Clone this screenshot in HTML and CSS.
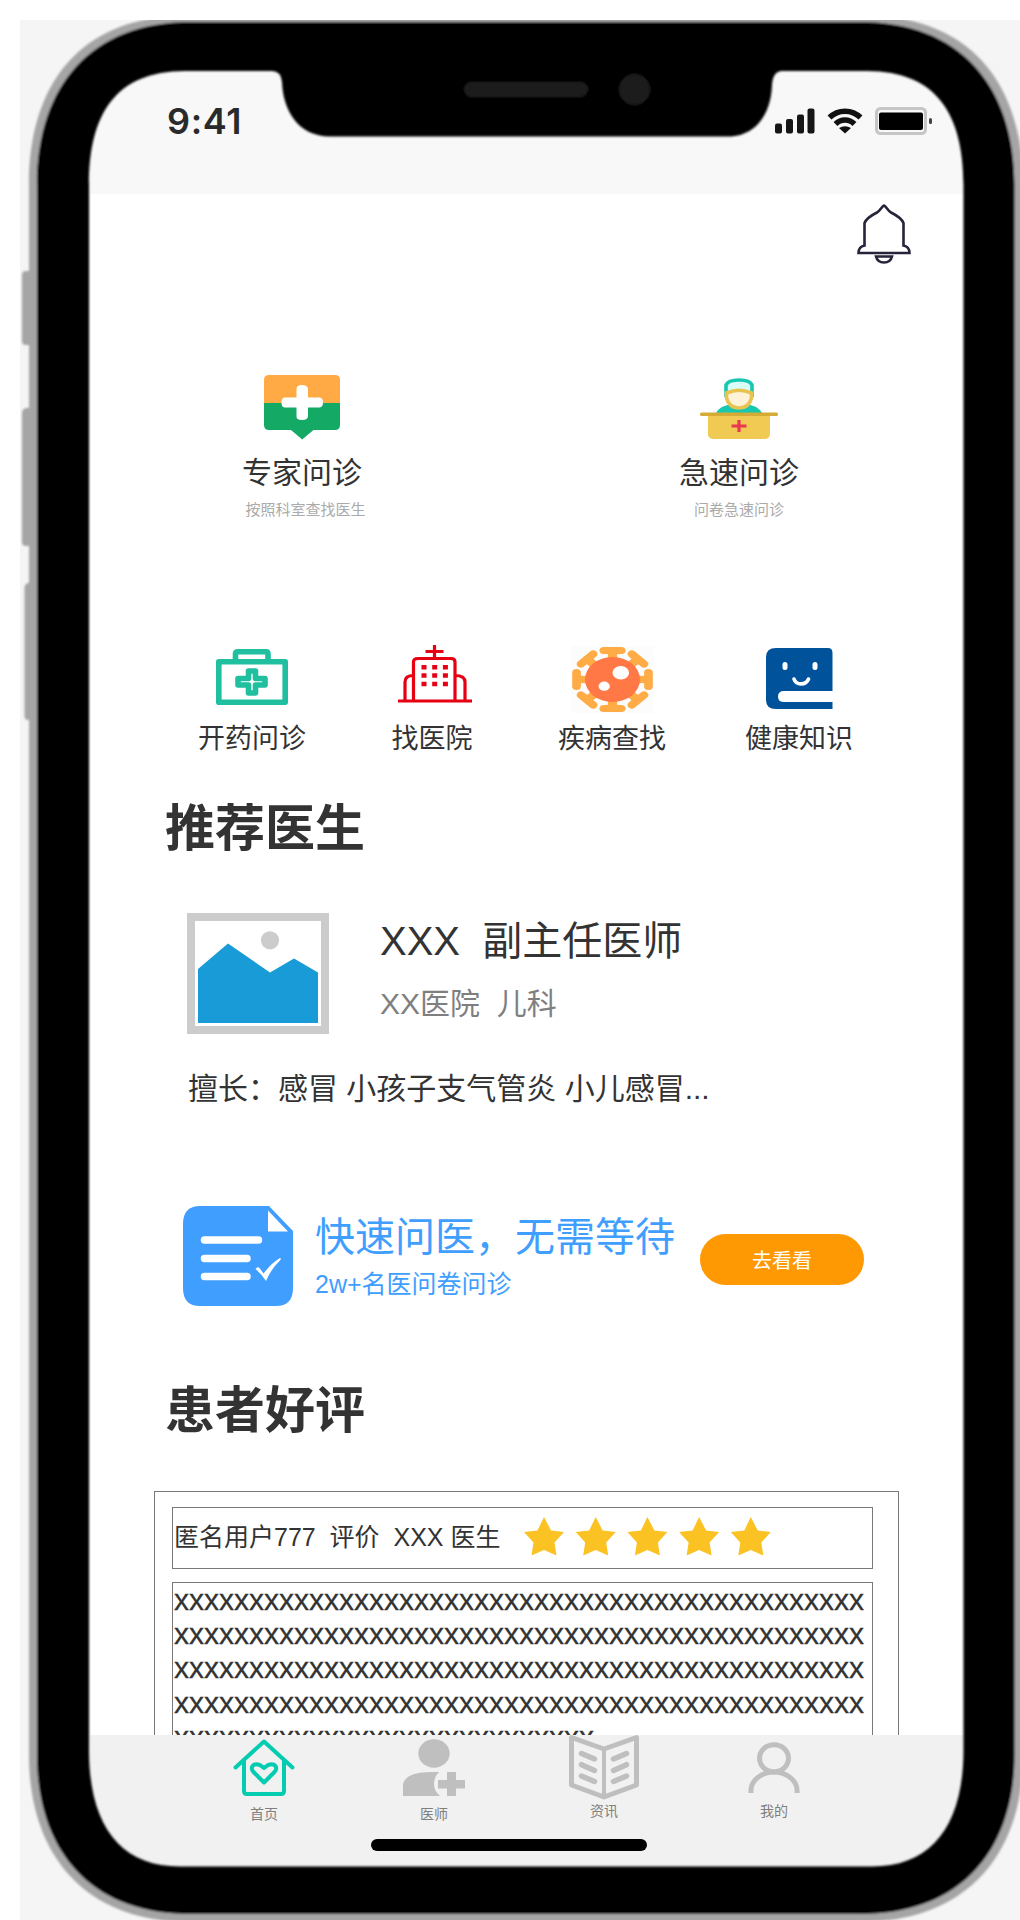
FILE: index.html
```html
<!DOCTYPE html>
<html lang="zh-CN">
<head>
<meta charset="utf-8">
<title>在线问诊</title>
<link rel="stylesheet" href="styles.css">
</head>
<body>
<div class="stage">
  <main class="screen">
    <header class="status">
      <span class="time">9:41</span>
      <svg class="signal" viewBox="0 0 40 26"><rect x="0" y="15.500" width="7" height="10" rx="2"/><rect x="11" y="11" width="7" height="14.500" rx="2"/><rect x="22" y="6.500" width="7" height="19" rx="2"/><rect x="32.500" y="0.500" width="7" height="25" rx="2"/></svg>
      <svg class="wifi" viewBox="0 0 36 26"><g fill="none" stroke="#111" stroke-width="5.500"><path d="M2.500 9.500C11 1 25 1 33.500 9.500"/><path d="M8.500 16C14 10.500 22 10.500 27.500 16"/></g><path d="M12 20Q18 16.500 24 20L18 25.500z" fill="#111"/></svg>
      <svg class="battery" viewBox="0 0 58 28"><rect x="1.500" y="1.500" width="49" height="25" rx="4" fill="none" stroke="#c6c6c6" stroke-width="3"/><rect x="4" y="5.500" width="44" height="17.500" rx="2" fill="#000"/><rect x="54" y="11" width="3" height="6" rx="1.500" fill="#444"/></svg>
    </header>

    <section class="feed">
      <div class="toolbar">
        <svg class="bell" viewBox="0 0 54 60" fill="none" stroke="#27233a" stroke-width="2.600"><path d="M27 1.500C25 2 23 7 20 8.500C15 11 9 15.500 7.500 19V41.500C4 42 1.500 45 1.500 49H52.500C52.500 45 50 42 46.500 41.500V19C45 15.500 39 11 34 8.500C31 7 29 2 27 1.500z"/><path d="M19 52.500H35C34 56.500 31 58.500 27 58.500S20 56.500 19 52.500z"/></svg>
      </div>

      <nav class="primary">
        <a class="entry">
          <svg class="entry-icon" width="76" height="65" viewBox="0 0 76 65"><path d="M5 0H71Q76 0 76 5V28H0V5Q0 0 5 0z" fill="#ffaa44"/><path d="M0 28H76V50Q76 55 71 55H49.500L38.200 64.500L27 55H5Q0 55 0 50z" fill="#14aa66"/><path d="M32.500 14Q32.500 10 38 10T44 14V22.500H55Q59 22.500 59 27.500T55 32.500H44V41Q44 45 38 45T32.500 41V32.500H21Q17.500 32.500 17.500 27.500T21 22.500H32.500z" fill="#fff"/></svg>
          <span class="entry-title">专家问诊</span>
          <span class="entry-note shift">按照科室查找医生</span>
        </a>
        <a class="entry">
          <svg class="entry-icon" width="78" height="62" viewBox="0 0 78 62"><path d="M16 35C20 28 27 26 39 26S58 28 62 35z" fill="#18c7b0"/><path d="M26 19V7Q28 2 39 2T52 7V19" fill="#d9fffb" stroke="#18c7b0" stroke-width="3.600"/><path d="M26.500 15Q39 9.500 51.500 15V20Q49 30 39 30T26.500 20z" fill="#fef2d8" stroke="#e9c351" stroke-width="3.600"/><path d="M8 36H70V56Q70 61 64 61H14Q8 61 8 56z" fill="#f0ca52"/><rect x="0" y="34.500" width="78" height="3.500" rx="1.500" fill="#d5aa35"/><path d="M39 42V54M31.500 48H46.500" stroke="#e8394f" stroke-width="3.200"/></svg>
          <span class="entry-title">急速问诊</span>
          <span class="entry-note">问卷急速问诊</span>
        </a>
      </nav>

      <nav class="secondary">
        <a class="shortcut">
          <span class="shortcut-icon"><svg width="72" height="56" viewBox="0 0 72 56"><g fill="none" stroke="#1fbf9f" stroke-width="5.600" stroke-linejoin="round"><rect x="2.800" y="12.800" width="66.400" height="40.400"/><path d="M19.500 12V5Q19.500 2.800 22 2.800H50Q52 2.800 52 5V12"/><path d="M32.500 22H39.500V29.500H49V36H39.500V44H32.500V36H22V29.500H32.500z"/></g></svg></span>
          <span>开药问诊</span>
        </a>
        <a class="shortcut">
          <span class="shortcut-icon hospital"><svg width="74" height="58" viewBox="0 0 74 58"><g fill="none" stroke="#e60012" stroke-width="3.200"><path d="M0 56H74M36.500 0V14M27.500 6.500H45.500M15.500 56V17Q15.500 13.500 20 13.500H53Q57 13.500 57 17V56M15.500 30.500Q7 30.500 7 37V56M57 30.500Q67 30.500 67 37V56"/><path d="M23.500 22.200H50M23.500 30.500H50M23.500 39H50" stroke-width="4.400" stroke-dasharray="5 5.700"/></g></svg></span>
          <span>找医院</span>
        </a>
        <a class="shortcut">
          <span class="shortcut-icon virus"><svg width="83" height="67" viewBox="-41.500 -33.500 83 67"><rect x="-41.500" y="-33.500" width="83" height="67" fill="#fcfcfc"/><defs><g id="spike"><path d="M-7-29H7" stroke="#ffac47" stroke-width="7" stroke-linecap="round"/><path d="M-5-27Q-2.500-25-4.500-20H4.500Q2.500-25 5-27z" fill="#ffac47"/></g></defs><g transform="scale(1.240 1)"><use href="#spike"/><use href="#spike" transform="rotate(45)"/><use href="#spike" transform="rotate(90)"/><use href="#spike" transform="rotate(135)"/><use href="#spike" transform="rotate(180)"/><use href="#spike" transform="rotate(225)"/><use href="#spike" transform="rotate(270)"/><use href="#spike" transform="rotate(315)"/></g><ellipse rx="27.500" ry="22.500" fill="#ff7846"/><ellipse cx="8.300" cy="-6.700" rx="8.300" ry="6.800" fill="#fff"/><ellipse cx="-8.300" cy="6.700" rx="5.600" ry="4.600" fill="#fff"/></svg></span>
          <span>疾病查找</span>
        </a>
        <a class="shortcut">
          <span class="shortcut-icon book"><svg width="67" height="62" viewBox="0 0 67 62"><path d="M10 0H62Q66.500 0 66.500 5V43H18Q12 43 12 48.500T18 54H66.500V61H10Q0 61 0 52V9Q0 0 10 0z" fill="#00529b"/><g fill="none" stroke="#fff" stroke-linecap="round"><path d="M19 16.500V19.500M49 16.500V19.500" stroke-width="5"/><path d="M28 31C30 37.500 40 37.500 42.500 31" stroke-width="3.600"/></g></svg></span>
          <span>健康知识</span>
        </a>
      </nav>

      <h2 class="heading">推荐医生</h2>
      <article class="doctor">
        <div class="doctor-head">
          <svg class="photo" viewBox="0 0 142 121"><path d="M0 0H142V121H0z" fill="#ccc"/><path d="M8 8H134V113H8z" fill="#fff"/><path d="M11 56L41 30.500L83 59.500L107 45.500L131 59.500V110H11z" fill="#189bd7"/><circle cx="83" cy="27.300" r="9.100" fill="#ccc"/></svg>
          <div class="doctor-info">
            <div class="doctor-name">XXX&nbsp; 副主任医师</div>
            <div class="doctor-dept">XX医院&nbsp; 儿科</div>
          </div>
        </div>
        <p class="skills">擅长：感冒 小孩子支气管炎 小儿感冒...</p>
      </article>

      <aside class="promo">
        <svg class="promo-icon" viewBox="0 0 110 100"><path d="M17 0H86L110 25V82Q110 100 93 100H17Q0 100 0 82V18Q0 0 17 0z" fill="#409eff"/><path d="M85 4.500L105 25.500H85z" fill="#fff"/><path d="M21.500 34H75.500M21.500 52.500H64M21.500 70.500H64" stroke="#fff" stroke-width="7.500" stroke-linecap="round"/><path d="M72.500 63Q74.500 60 76.500 62L80.500 67.500Q89 56.500 97 52Q98.500 52 97 54.500Q88 63 83 75Q78.500 68 72.500 63z" fill="#fff"/></svg>
        <div class="promo-copy">
          <div class="promo-title">快速问医，无需等待</div>
          <div class="promo-sub">2w+名医问卷问诊</div>
        </div>
        <button class="go">去看看</button>
      </aside>

      <h2 class="heading reviews">患者好评</h2>
      <article class="review">
        <div class="review-head">
          <span>匿名用户777&nbsp; 评价&nbsp; XXX 医生</span>
          <svg class="stars" viewBox="0 0 247 39"><defs><path id="star" d="M20 0L27 13.500L40 15L30.500 25.500L32.500 38.500L20 33L7.500 38.500L9.500 25.500L0 15L13.500 13.500z" fill="#fbc224"/></defs><use href="#star"/><use href="#star" x="51.700"/><use href="#star" x="103.400"/><use href="#star" x="155.100"/><use href="#star" x="206.800"/></svg>
        </div>
        <p class="review-body">xxxxxxxxxx<wbr>xxxxxxxxxx<wbr>xxxxxxxxxx<wbr>xxxxxxxxxx<wbr>xxxxxxxxxx<wbr>xxxxxxxxxx<wbr>xxxxxxxxxx<wbr>xxxxxxxxxx<wbr>xxxxxxxxxx<wbr>xxxxxxxxxx<wbr>xxxxxxxxxx<wbr>xxxxxxxxxx<wbr>xxxxxxxxxx<wbr>xxxxxxxxxx<wbr>xxxxxxxxxx<wbr>xxxxxxxxxx<wbr>xxxxxxxxxx<wbr>xxxxxxxxxx<wbr>xxxxxxxxxx<wbr>xxxxxxxxxx<wbr>xxxxxxxxxx<wbr>xx</p>
      </article>
    </section>

    <footer class="dock">
      <nav class="tabs">
        <a class="tab"><svg width="62" height="58" viewBox="0 0 62 58" fill="none" stroke="#04ccb0" stroke-width="4" stroke-linecap="round" stroke-linejoin="round"><path d="M2.500 28.500L31 2.500L59.500 28.500M11 21.500V52Q11 55 14 55H48Q51 55 51 52V21.500"/><path d="M31 43.500L20.500 33Q17 29 20.500 26Q25 23.500 31 29Q37 23.500 41.500 26Q45 29 41.500 33z"/></svg><span>首页</span></a>
        <a class="tab"><svg width="62" height="58" viewBox="0 0 62 58" fill="#bfbfbf"><ellipse cx="31" cy="14.500" rx="15.700" ry="14.200"/><path d="M0 57V45Q3 33 28 33H36Q31 38 31 45T37 57z"/><path d="M44 33H53V41H62V49.500H53V57H44V49.500H35V41H44z"/></svg><span>医师</span></a>
        <a class="tab news"><svg width="70" height="65" viewBox="0 0 70 65" fill="none" stroke="#bfbfbf"><path d="M2.500 2.500V50L35 62L67.500 50V2.500L35 14z" stroke-width="5" stroke-linejoin="round"/><path d="M35 14V62" stroke-width="4"/><path d="M12.500 18.500L25.500 24M12.500 29.700L25.500 35.500M12.500 41L25.500 46.500M57.500 18.500L44.500 24M57.500 29.700L44.500 35.500M57.500 41L44.500 46.500" stroke-width="5.500" stroke-linecap="round"/></svg><span>资讯</span></a>
        <a class="tab mine"><svg width="52" height="52" viewBox="0 0 52 52" fill="none" stroke="#bfbfbf" stroke-width="5"><ellipse cx="26" cy="16.300" rx="14.500" ry="13.600"/><path d="M2.900 51V49C2.900 38 14 30 26 30S49.100 38 49.100 49V51"/></svg><span>我的</span></a>
      </nav>
      <div class="home-bar"></div>
    </footer>
  </main>

  <svg class="device" viewBox="20 20 1000 1900">
    <defs><filter id="soft" x="-5%" y="-5%" width="110%" height="110%"><feGaussianBlur stdDeviation="0.900"/></filter></defs>
    <g filter="url(#soft)">
      <path fill="#a5a5a5" d="M40 271H26Q22 271 22 275V341Q22 345 26 345H40zM40 408H26Q22 409 22 413V542Q22 546 26 546H40zM40 583H28Q24.500 584 24.500 588V716Q24.500 720 28 720H40z"/>
      <path fill="#a5a5a5" fill-rule="evenodd" d="M185 16C87 16 29 77 29 185V1755C29 1855 85 1922 190 1922H861C966 1922 1023 1855 1023 1755V185C1023 77 964 16 866 16zM185 45C100 45 60 100 60 185V1755C60 1835 110 1890 190 1890H861C941 1890 990 1835 990 1755V185C990 100 950 45 867 45z"/>
      <path fill="#000" fill-rule="evenodd" d="M190 22C92 22 37 85 37 185V1755C37 1850 90 1914 190 1914H861C961 1914 1014.500 1850 1014.500 1755V185C1014.500 85 959 22 861 22zM185 71H272Q281 71 282 82C283 110 298 136.500 330 136.500H728C755 136.500 771 115 772 85Q773 71 782 71H867C937 71 963.500 115 963.500 185V1750C963.500 1825 932 1866.500 872 1866.500H180C120 1866.500 89 1825 89 1750V185C89 115 115 71 185 71z"/>
      <rect x="464" y="82" width="124" height="15" rx="7.500" fill="#1c1c1e"/>
      <circle cx="634.500" cy="89.500" r="15.500" fill="#1c1c1e"/>
    </g>
  </svg>
</div>
</body>
</html>
```
FILE: styles.css
```css
* { box-sizing: border-box; }

body {
  margin: 0;
  background: #fff;
  color: #333;
  font-family: "Liberation Sans", "Noto Sans CJK SC", sans-serif;
}

h2, p { margin: 0; }
svg { display: block; flex: none; }

.stage {
  position: relative;
  width: 1000px;
  height: 1900px;
  margin: 20px 0 0 20px;
  padding: 50px 56px 0 70px;
  overflow: hidden;
  background: #f5f5f5;
}

/* Handset bezel lies over the screen edges */
.device {
  position: absolute;
  inset: 0;
  width: 1000px;
  height: 1900px;
  pointer-events: none;
}

.screen {
  display: grid;
  grid-template-rows: 124px 1541px 132px;
  width: 874px;
  background: #fff;
}

.status {
  display: flex;
  align-items: flex-start;
  padding: 37px 36px 0 77px;
  background: #f8f8f8;
}

.time {
  flex: 1;
  color: #2a2a2a;
  font: 600 36px/29px Inter, sans-serif;
  letter-spacing: 0.6px;
}

.signal { width: 40px; height: 26px; margin-top: 1px; fill: #161616; }
.wifi { width: 36px; height: 26px; margin: 1px 12px 0; }
.battery { width: 58px; height: 28px; margin-right: -5px; }

.feed { overflow: hidden; }

.toolbar {
  display: flex;
  justify-content: flex-end;
  height: 181px;
  padding: 10px 53.5px 0 0;
}

.bell { width: 54px; height: 60px; }

.primary {
  display: grid;
  grid-template-columns: 424px 450px;
  height: 270px;
  align-items: start;
}

.entry {
  display: grid;
  grid-template-rows: 78px 47px 20px;
  justify-items: center;
  align-items: start;
}

.entry-icon { align-self: end; margin-bottom: 13px; }
.entry-title { font-size: 30px; line-height: 40px; }
.entry-note { color: #aaa; font-size: 15px; line-height: 20px; }
.shift { padding-left: 7px; }

.secondary {
  display: grid;
  grid-template-columns: 180px 180px 180px 194px;
  height: 154px;
  padding-left: 72px;
}

.shortcut {
  display: flex;
  flex-direction: column;
  align-items: center;
  gap: 8px;
  font-size: 27px;
  line-height: 36px;
}

.shortcut-icon { display: flex; height: 68px; padding-top: 4px; }
.hospital { padding: 0 0 0 5px; }
.virus { padding-top: 1px; }
.book { padding-top: 3px; }

.heading { padding-left: 75px; font-size: 50px; line-height: 60px; }

.doctor { padding: 54px 0 0 97px; }
.doctor-head { display: flex; gap: 51px; }
.photo { width: 142px; height: 121px; }
.doctor-info { padding-top: 3px; }
.doctor-name { font-size: 40px; line-height: 50px; }
.doctor-dept { margin-top: 18px; color: #7f7f7f; font-size: 30px; line-height: 40px; }
.skills { margin-top: 35px; padding-left: 1px; font-size: 30px; line-height: 40px; }

.promo { display: flex; height: 100px; margin: 97px 0 0 93px; }
.promo-icon { width: 110px; height: 100px; }
.promo-copy { width: 385px; padding: 6px 0 0 22px; color: #409eff; }
.promo-title { font-size: 40px; line-height: 50px; }
.promo-sub { margin-top: 7px; font-size: 25px; line-height: 30px; }

.go {
  width: 164px;
  height: 51px;
  margin: 28px 0 0 22px;
  padding: 0;
  border: 0;
  border-radius: 26px;
  background: #ff9903;
  color: #fff;
  font: inherit;
  font-size: 20px;
}

.reviews { margin-top: 75px; }

.review {
  width: 745px;
  height: 300px;
  margin: 50px 0 0 64px;
  padding: 15px 0 0 17px;
  border: 1px solid #797979;
}

.review-head {
  display: flex;
  width: 701px;
  height: 62px;
  padding: 9px 0 0 1px;
  border: 1px solid #797979;
  font-size: 25px;
  line-height: 40px;
}

.stars { width: 247px; height: 39px; margin-left: 24px; }

.review-body {
  width: 701px;
  height: 200px;
  margin-top: 13px;
  padding-left: 1px;
  border: 1px solid #797979;
  font-size: 30px;
  line-height: 34.2px;
  word-break: break-all;
  -webkit-text-stroke: 0.3px #333;
}

.dock { background: #f1f1f1; }

.tabs {
  display: grid;
  grid-template-columns: repeat(4, 170px);
  height: 104px;
  padding-left: 89px;
}

.tab {
  display: flex;
  flex-direction: column;
  align-items: center;
  gap: 7px;
  padding-top: 4px;
  color: #7f7f7f;
  font-size: 14px;
  line-height: 20px;
}

.news { gap: 1px; padding-top: 0; }
.mine { gap: 7px; padding-top: 7px; }

.home-bar {
  width: 276px;
  height: 12px;
  margin-left: 281px;
  border-radius: 6px;
  background: #000;
}
```
